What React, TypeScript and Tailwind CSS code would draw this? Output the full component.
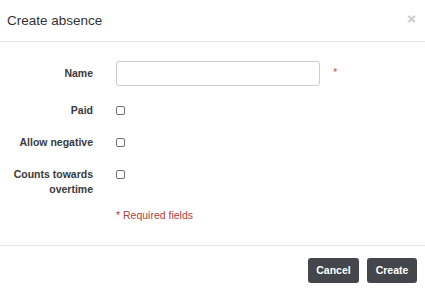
import React from 'react';

function Check() {
  return <span className="mt-[3px] block h-[9px] w-[9px] rounded-[2px] border border-[#6f6f6f] bg-white" />;
}

function Row({ label, children }: { label: React.ReactNode; children: React.ReactNode }) {
  return (
    <div className="flex items-start">
      <div className="w-[93px] text-right text-[10.5px] font-bold leading-[15px] text-[#3a3a3a]">{label}</div>
      <div className="ml-[23px] flex">{children}</div>
    </div>
  );
}

export default function App() {
  return (
    <div className="h-[291px] w-[425px] overflow-hidden bg-white font-['Liberation_Sans',Arial,sans-serif] text-[#333]">
      <header className="flex h-[42px] items-center justify-between border-b border-[#e5e5e5] pl-[7px] pr-[9px]">
        <h4 className="text-[13.5px] leading-[19px] text-[#333]">Create absence</h4>
        <button className="-mt-[4px] text-[15px] font-bold leading-none text-[#c6c6c6]">×</button>
      </header>

      <div className="flex h-[204px] flex-col border-b border-[#e5e5e5] pt-[19px]">
        <div className="flex items-center">
          <label className="w-[93px] text-right text-[10.5px] font-bold leading-[15px] text-[#3a3a3a]">Name</label>
          <input
            type="text"
            className="ml-[23px] h-[25px] w-[204px] rounded-[3px] border border-[#cccccc] px-2 text-[10.5px] outline-none"
          />
          <span className="ml-[13px] -mt-[3px] text-[11px] leading-none text-[#c55a5a]">*</span>
        </div>

        <div className="mt-[17px] flex flex-col gap-[17px]">
          <Row label="Paid">
            <Check />
          </Row>
          <Row label="Allow negative">
            <Check />
          </Row>
          <Row label={<>Counts towards<br />overtime</>}>
            <Check />
          </Row>
        </div>

        <p className="ml-[116px] mt-[11px] text-[10.5px] leading-[15px] text-[#a94442]">* Required fields</p>
      </div>

      <footer className="flex justify-end gap-[8px] pr-[8px] pt-[12px]">
        <button className="h-[25px] w-[51px] rounded-[3px] bg-[#43474b] text-[10.5px] font-bold text-white">Cancel</button>
        <button className="h-[25px] w-[50px] rounded-[3px] bg-[#43474b] text-[10.5px] font-bold text-white">Create</button>
      </footer>
    </div>
  );
}
